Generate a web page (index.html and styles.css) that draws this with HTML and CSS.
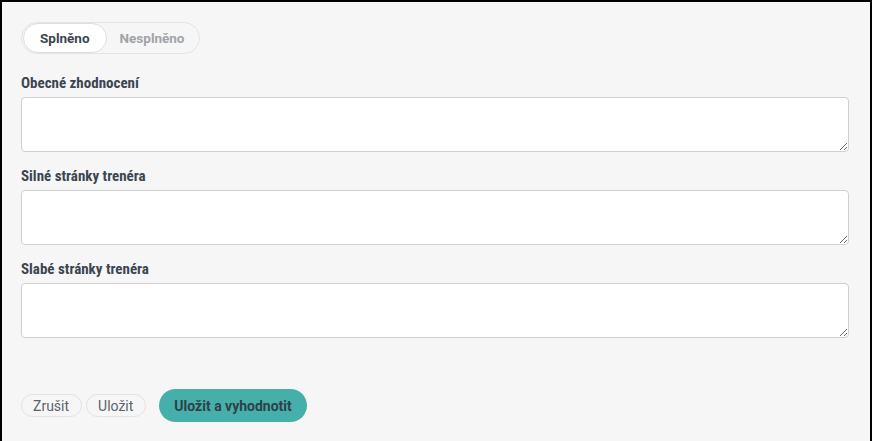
FILE: index.html
```html
<!DOCTYPE html>
<html lang="cs">
<head>
  <meta charset="UTF-8" />
  <meta name="viewport" content="width=device-width, initial-scale=1.0" />
  <title>Hodnocení trenéra</title>
  <link rel="stylesheet" href="styles.css">
</head>
<body>
  <div class="frame">
    <div class="toggle">
      <button class="toggle-item active">Splněno</button>
      <button class="toggle-item">Nesplněno</button>
    </div>

    <div class="field first">
      <label for="general">Obecné zhodnocení</label>
      <textarea id="general"></textarea>
    </div>

    <div class="field">
      <label for="strong">Silné stránky trenéra</label>
      <textarea id="strong"></textarea>
    </div>

    <div class="field">
      <label for="weak">Slabé stránky trenéra</label>
      <textarea id="weak"></textarea>
    </div>

    <div class="actions">
      <button class="btn-small">Zrušit</button>
      <button class="btn-small">Uložit</button>
      <button class="btn-main">Uložit a vyhodnotit</button>
    </div>
  </div>
</body>
</html>
```

FILE: styles.css
```css
html, body {
  margin: 0;
  padding: 0;
  background: #000;
  font-family: 'Roboto', 'Liberation Sans', Arial, sans-serif;
  font-stretch: condensed;
}

.frame {
  height: 436px;
  border: 2px solid #000;
  background: #f6f6f6;
  padding: 20px 21px 0 19px;
  box-sizing: content-box;
  width: calc(872px - 4px - 40px);
}

.toggle {
  display: inline-flex;
  align-items: center;
  height: 30px;
  padding: 0 1px;
  border: 1px solid #e4e4e4;
  border-radius: 17px;
  background: #f6f6f6;
}

.toggle-item {
  height: 30px;
  padding: 0 12px;
  border: 1px solid transparent;
  border-radius: 16px;
  background: transparent;
  font-family: inherit;
  font-size: 13.5px;
  font-weight: 700;
  color: #a0a4a8;
  cursor: pointer;
}
.toggle-item.active {
  padding: 0 16px;
  background: #fff;
  border-color: #dedede;
  color: #3b4651;
}

.field {
  display: flex;
  flex-direction: column;
  margin-top: 14px;
}
.field.first {
  margin-top: 19px;
}

.field label {
  font-size: 15px;
  line-height: 20px;
  font-weight: 700;
  color: #3b4651;
  margin-bottom: 4px;
}

.field textarea {
  height: 55px;
  box-sizing: border-box;
  border: 1px solid #cfcfcf;
  border-radius: 4px;
  background: #fff;
  padding: 6px 8px;
  font-family: inherit;
  font-size: 14px;
  outline: none;
}

.actions {
  display: flex;
  align-items: center;
  margin-top: 51px;
}

.btn-small {
  height: 23px;
  padding: 0 12px 0 11px;
  margin-right: 4px;
  border: 1px solid #e2e2e2;
  border-radius: 12px;
  background: #f6f6f6;
  font-family: inherit;
  font-size: 14px;
  color: #5a636c;
  cursor: pointer;
}

.btn-main {
  height: 33px;
  margin-left: 9px;
  padding: 0 15px;
  border: none;
  border-radius: 17px;
  background: #45b0aa;
  font-family: inherit;
  font-size: 14px;
  font-weight: 700;
  color: #2f4048;
  cursor: pointer;
}
```
